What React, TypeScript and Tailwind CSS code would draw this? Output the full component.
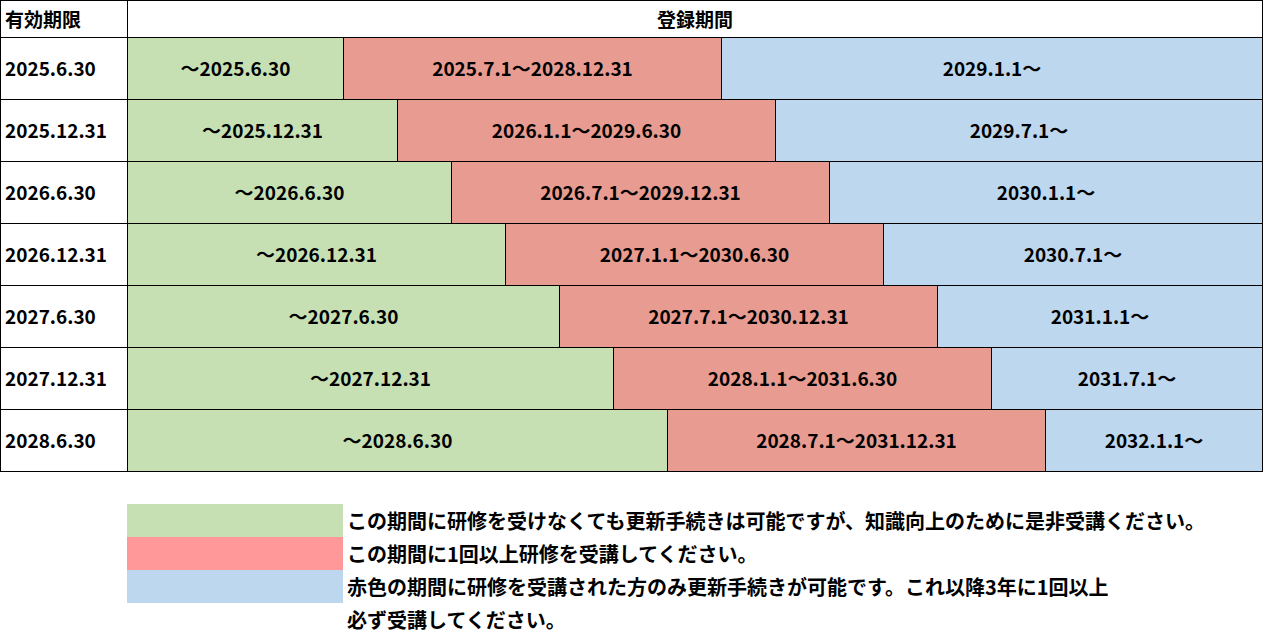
const rows = [
  { limit: '2025.6.30', green: '～2025.6.30', red: '2025.7.1～2028.12.31', blue: '2029.1.1～' },
  { limit: '2025.12.31', green: '～2025.12.31', red: '2026.1.1～2029.6.30', blue: '2029.7.1～' },
  { limit: '2026.6.30', green: '～2026.6.30', red: '2026.7.1～2029.12.31', blue: '2030.1.1～' },
  { limit: '2026.12.31', green: '～2026.12.31', red: '2027.1.1～2030.6.30', blue: '2030.7.1～' },
  { limit: '2027.6.30', green: '～2027.6.30', red: '2027.7.1～2030.12.31', blue: '2031.1.1～' },
  { limit: '2027.12.31', green: '～2027.12.31', red: '2028.1.1～2031.6.30', blue: '2031.7.1～' },
  { limit: '2028.6.30', green: '～2028.6.30', red: '2028.7.1～2031.12.31', blue: '2032.1.1～' },
];

const font = { fontFamily: '"Noto Sans CJK JP", "Noto Sans", sans-serif' };

const App = () => {
  return (
    <div className="w-[1263px] bg-white text-black font-bold text-[19px]" style={font}>
      {/* Table */}
      <div className="border-l border-t border-black">
        <div className="flex h-[37px]">
          <div className="w-[127px] shrink-0 border-r border-b border-black flex items-center pl-[4px]">有効期限</div>
          <div className="flex-1 border-r border-b border-black flex items-center justify-center">登録期間</div>
        </div>
        {rows.map((row, i) => (
          <div key={row.limit} className="flex h-[62px]">
            <div className="w-[127px] shrink-0 border-r border-b border-black flex items-center pl-[4px]">
              {row.limit}
            </div>
            <div
              className="shrink-0 bg-[#c6e0b4] border-r border-b border-black flex items-center justify-center"
              style={{ width: 216 + 54 * i }}
            >
              {row.green}
            </div>
            <div className="w-[378px] shrink-0 bg-[#e89b90] border-r border-b border-black flex items-center justify-center">
              {row.red}
            </div>
            <div className="flex-1 bg-[#bdd7ee] border-r border-b border-black flex items-center justify-center">
              {row.blue}
            </div>
          </div>
        ))}
      </div>

      {/* Legend */}
      <div className="flex mt-[32px] pl-[127px] text-[20px] leading-[33px]">
        <div className="w-[216px] shrink-0 flex flex-col">
          <div className="h-[33px] bg-[#c6e0b4]" />
          <div className="h-[33px] bg-[#ff9999]" />
          <div className="h-[33px] bg-[#bdd7ee]" />
        </div>
        <div className="pl-[4px] pb-[4px]">
          <p>この期間に研修を受けなくても更新手続きは可能ですが、知識向上のために是非受講ください。</p>
          <p>この期間に1回以上研修を受講してください。</p>
          <p>
            赤色の期間に研修を受講された方のみ更新手続きが可能です。これ以降3年に1回以上
            <br />
            必ず受講してください。
          </p>
        </div>
      </div>
    </div>
  );
};

export default App;
